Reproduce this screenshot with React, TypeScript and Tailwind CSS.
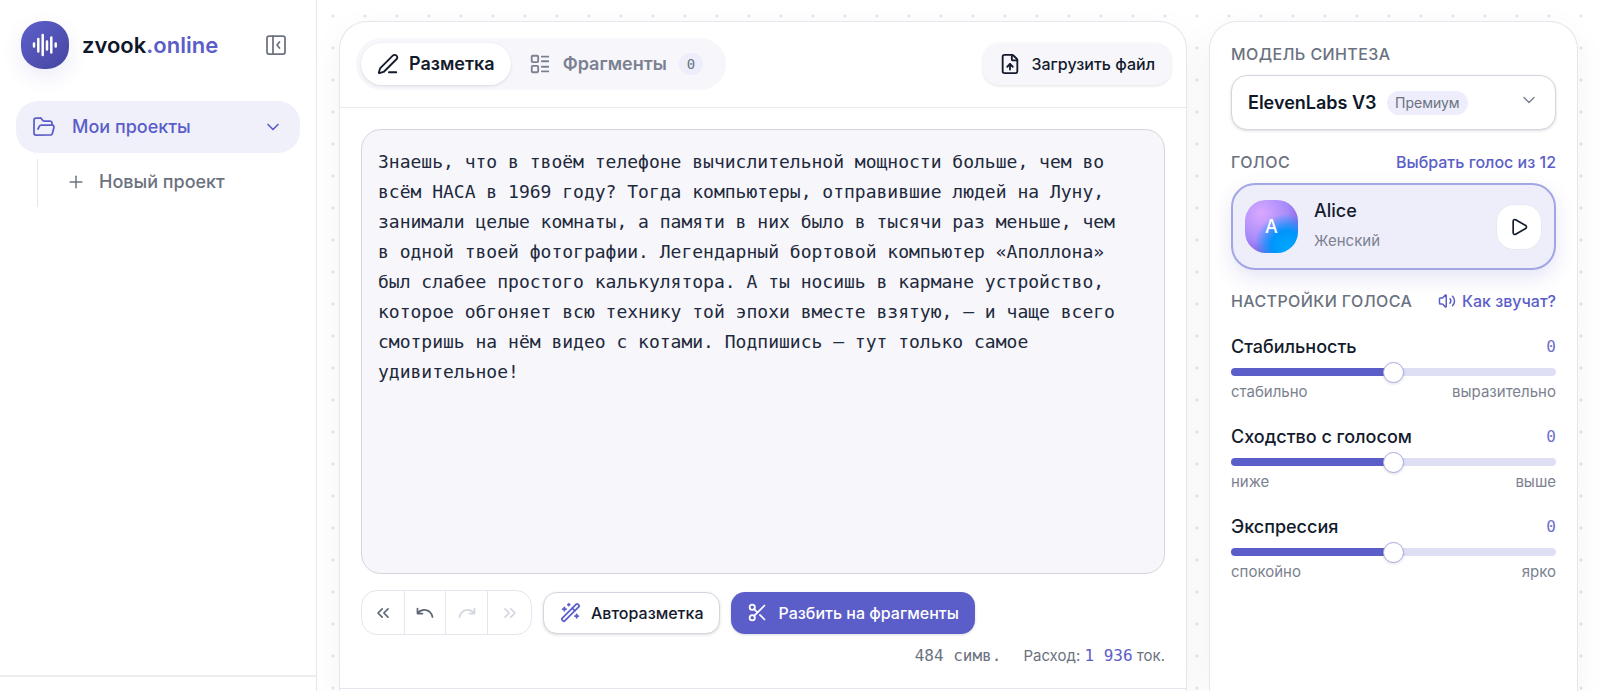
import { useState } from 'react'
import {
  ChevronDown,
  ChevronsLeft,
  ChevronsRight,
  FileUp,
  FolderOpen,
  LayoutList,
  PenLine,
  Play,
  Plus,
  Scissors,
  Volume2,
  WandSparkles,
} from 'lucide-react'

const SAMPLE_TEXT =
  'Знаешь, что в твоём телефоне вычислительной мощности больше, чем во всём НАСА в 1969 году? Тогда компьютеры, отправившие людей на Луну, занимали целые комнаты, а памяти в них было в тысячи раз меньше, чем в одной твоей фотографии. Легендарный бортовой компьютер «Аполлона» был слабее простого калькулятора. А ты носишь в кармане устройство, которое обгоняет всю технику той эпохи вместе взятую, — и чаще всего смотришь на нём видео с котами. Подпишись — тут только самое удивительное!'

const SLIDERS = [
  { id: 'stability', label: 'Стабильность', min: 'стабильно', max: 'выразительно' },
  { id: 'similarity', label: 'Сходство с голосом', min: 'ниже', max: 'выше' },
  { id: 'expression', label: 'Экспрессия', min: 'спокойно', max: 'ярко' },
]

function Logo() {
  return (
    <span className="flex size-12 items-center justify-center rounded-[22px] bg-linear-to-br from-[#5f60cb] to-[#4546a0] shadow-[0_8px_20px_rgba(91,94,200,0.12)]">
      <svg viewBox="0 0 26 24" className="h-6 w-[26px]" fill="none" stroke="white" strokeWidth="2.5" strokeLinecap="round">
        <path d="M2 10.500v3M6.300 6v12.500M10.700 2v20M15 8.500v8M19.300 4.500v15M23.700 10.500v3" />
      </svg>
    </span>
  )
}

function PanelIcon() {
  return (
    <svg viewBox="0 0 20 20" className="size-5" fill="none" stroke="currentColor" strokeWidth="1.75" strokeLinecap="round" strokeLinejoin="round">
      <rect x="1" y="1" width="18" height="18" rx="2" />
      <path d="M7 1v18M13.500 7 11 10l2.500 3" />
    </svg>
  )
}

function Arrow({ flip = false }: { flip?: boolean }) {
  return (
    <svg viewBox="0 0 18 12" className={`h-3 w-[18px] ${flip ? '-scale-x-100' : ''}`} fill="none" stroke="currentColor" strokeWidth="1.75" strokeLinecap="round" strokeLinejoin="round">
      <path d="M1.500 1.500v5h5M2 6C6 1.500 14.500 1.500 16.500 10" />
    </svg>
  )
}

function Sidebar() {
  return (
    <aside className="flex w-[317px] shrink-0 flex-col border-r border-[#e5e6ee] bg-white">
      <div className="flex items-center gap-[13px] pt-[21px] pr-[30px] pl-[21px]">
        <Logo />
        <a href="#" className="flex-1 text-[22px] leading-7 font-semibold text-[#0f172a]">
          zvook<span className="text-[#5b5ec8]">.online</span>
        </a>
        <button type="button" aria-label="Свернуть меню" className="text-[#6b7280]">
          <PanelIcon />
        </button>
      </div>
      <nav className="mt-8 flex-1 px-4">
        <button type="button" className="flex h-[52px] w-full items-center gap-4 rounded-[22px] bg-[#f0f0fb] px-4 text-lg font-medium text-[#5b5ec8]">
          <FolderOpen size={24} strokeWidth={1.75} />
          <span className="flex-1 text-left">Мои проекты</span>
          <ChevronDown size={20} strokeWidth={2} className="mr-px" />
        </button>
        <div className="mt-[6px] ml-[21px] flex h-12 border-l border-[#e5e6ee] pb-[2px] pl-7">
          <button type="button" className="flex items-center gap-[13px] text-lg font-medium text-[#6b7280]">
            <Plus size={20} strokeWidth={1.75} />
            Новый проект
          </button>
        </div>
      </nav>
      <div className="h-4 border-t-2 border-[#ededf0]" />
    </aside>
  )
}

function Editor() {
  const [text, setText] = useState(SAMPLE_TEXT)

  return (
    <section className="flex min-w-0 flex-1 flex-col rounded-t-[28px] border border-b-0 border-[#e5e6ee] bg-white shadow-[0_8px_32px_rgba(15,23,42,0.05)]">
      <header className="flex items-center justify-between border-b border-[#e8e9ef] pt-4 pr-[15px] pb-[17px] pl-4">
        <div className="flex rounded-[26px] bg-[#f6f6fb] p-[5px]">
          <button type="button" className="flex h-[42px] items-center gap-[10px] rounded-[21px] bg-white px-4 text-lg font-semibold text-[#141b2d] shadow-[0_1px_3px_rgba(15,23,42,0.12)]">
            <PenLine size={22} strokeWidth={2} />
            Разметка
          </button>
          <button type="button" className="flex h-[42px] items-center gap-3 px-[18px] text-lg font-semibold text-[#7b8190]">
            <LayoutList size={22} strokeWidth={2} />
            Фрагменты
            <span className="rounded-full bg-[#ededfb] px-2 font-['DejaVu_Sans_Mono',monospace] text-sm leading-[22px] font-normal text-[#6b7280]">0</span>
          </button>
        </div>
        <button type="button" className="flex h-[42px] items-center gap-[10px] rounded-2xl bg-[#f6f6fb] px-4 text-base font-medium text-[#141b2d] shadow-[0_1px_3px_rgba(15,23,42,0.12)]">
          <FileUp size={22} strokeWidth={2} />
          Загрузить файл
        </button>
      </header>
      <div className="flex flex-1 flex-col px-[21px] pt-[21px]">
        <textarea
          aria-label="Текст для озвучки"
          value={text}
          onChange={e => setText(e.target.value)}
          className="h-[445px] w-full resize-none rounded-[20px] border border-[#d3d6de] bg-[#f6f6fb] pt-[17px] pr-8 pl-4 font-['DejaVu_Sans_Mono',monospace] text-lg leading-[30px] text-[#1e293b] outline-none"
        />
        <div className="mt-4 flex items-center gap-[11px]">
          <div className="flex h-[45px] divide-x divide-[#e5e6ee] overflow-hidden rounded-2xl border border-[#e5e6ee] text-[#5f6675]">
            <button type="button" aria-label="В начало истории" className="flex w-[43px] items-center justify-center">
              <ChevronsLeft size={20} strokeWidth={2} />
            </button>
            <button type="button" aria-label="Отменить" className="flex w-[41px] items-center justify-center">
              <Arrow />
            </button>
            <button type="button" aria-label="Повторить" disabled className="flex w-[42px] items-center justify-center text-[#d3d6de]">
              <Arrow flip />
            </button>
            <button type="button" aria-label="В конец истории" disabled className="flex w-[43px] items-center justify-center text-[#d3d6de]">
              <ChevronsRight size={20} strokeWidth={2} />
            </button>
          </div>
          <button type="button" className="flex h-[42px] items-center gap-[10px] rounded-[14px] border border-[#d3d6de] bg-white px-4 text-base font-medium text-[#141b2d] shadow-[0_1px_3px_rgba(15,23,42,0.15)]">
            <WandSparkles size={21} strokeWidth={2} className="text-[#5b5ec8]" />
            Авторазметка
          </button>
          <button type="button" className="flex h-[42px] items-center gap-[10px] rounded-[14px] bg-[#5b5ec8] px-4 text-base font-medium text-white shadow-[0_1px_3px_rgba(15,23,42,0.15)]">
            <Scissors size={21} strokeWidth={2} />
            Разбить на фрагменты
          </button>
        </div>
        <div className="mt-[9px] flex items-baseline justify-end gap-[22px] text-[15px] leading-6 text-[#6b7280]">
          <span className="font-['DejaVu_Sans_Mono',monospace] text-base">484 симв.</span>
          <span>
            Расход: <span className="font-['DejaVu_Sans_Mono',monospace] text-base text-[#5b5ec8]">1 936</span> ток.
          </span>
        </div>
        <div className="-mx-[21px] mt-auto h-[3px] border-t border-[#e5e6ee]" />
      </div>
    </section>
  )
}

function Slider({ id, label, min, max }: { id: string; label: string; min: string; max: string }) {
  const [value, setValue] = useState(0)
  const percent = (value + 100) / 2

  return (
    <div>
      <div className="flex h-7 items-center justify-between">
        <label htmlFor={id} className="text-lg font-medium text-[#141b2d]">{label}</label>
        <output htmlFor={id} className="font-['DejaVu_Sans_Mono',monospace] text-base text-[#6d70d0]">{value}</output>
      </div>
      <input
        id={id}
        type="range"
        min={-100}
        max={100}
        value={value}
        onChange={e => setValue(Number(e.target.value))}
        style={{ backgroundImage: `linear-gradient(to right, #5b5ec8 ${percent}%, #dedff5 ${percent}%)` }}
        className="mt-[7px] block h-2 w-full appearance-none rounded-full [&::-webkit-slider-thumb]:size-[21px] [&::-webkit-slider-thumb]:appearance-none [&::-webkit-slider-thumb]:rounded-full [&::-webkit-slider-thumb]:border [&::-webkit-slider-thumb]:border-[#a9abe3] [&::-webkit-slider-thumb]:bg-white [&::-webkit-slider-thumb]:shadow-[0_1px_3px_rgba(15,23,42,0.15)]"
      />
      <div className="mt-[6px] flex justify-between text-[15px] leading-5 text-[#7b8190]">
        <span>{min}</span>
        <span>{max}</span>
      </div>
    </div>
  )
}

function VoicePanel() {
  return (
    <aside className="w-[369px] shrink-0 rounded-t-[28px] border border-b-0 border-[#e5e6ee] bg-white px-[21px] pt-5 shadow-[0_8px_32px_rgba(15,23,42,0.05)]">
      <label htmlFor="model" className="block text-base font-medium tracking-wide text-[#6b7280] uppercase">Модель синтеза</label>
      <div className="relative mt-[9px]">
        <select id="model" className="h-[55px] w-full appearance-none rounded-2xl border border-[#d3d6de] bg-white px-4 text-lg font-semibold text-[#0f172a] shadow-[0_1px_3px_rgba(15,23,42,0.15)]">
          <option>ElevenLabs V3</option>
        </select>
        <span className="pointer-events-none absolute top-4 left-[156px] rounded-full bg-[#ededfb] px-2 text-sm leading-6 text-[#6b7280]">Премиум</span>
        <ChevronDown size={20} strokeWidth={1.75} className="pointer-events-none absolute top-[15px] right-[17px] text-[#7b8190]" />
      </div>

      <div className="mt-5 flex items-center justify-between">
        <h2 className="text-base font-medium tracking-wide text-[#6b7280] uppercase">Голос</h2>
        <a href="#" className="text-base font-medium text-[#5b5ec8]">Выбрать голос из 12</a>
      </div>
      <div className="mt-[9px] flex h-[87px] items-center gap-4 rounded-[24px] border-2 border-[#a3a5e6] bg-[#eeeefa] px-3 shadow-[0_8px_20px_rgba(91,94,200,0.16)]">
        <span className="flex size-[53px] items-center justify-center rounded-[21px] bg-[radial-gradient(circle_at_78%_86%,#00a6ff_0%,#0095fb_24%,transparent_52%),radial-gradient(circle_at_30%_25%,#d9a8ff_0%,#a78bfa_50%,#8450d8_85%)] text-lg font-medium text-white">A</span>
        <div className="flex flex-1 flex-col gap-[6px] pb-[2px]">
          <span className="text-lg leading-6 font-medium text-[#141b2d]">Alice</span>
          <span className="text-[15px] leading-6 text-[#7b8190]">Женский</span>
        </div>
        <button type="button" aria-label="Прослушать" className="flex size-[46px] items-center justify-center rounded-[18px] border border-[#e8e9f2] bg-white text-[#141b2d]">
          <Play size={20} strokeWidth={2} />
        </button>
      </div>

      <div className="mt-[19px] flex items-center justify-between">
        <h2 className="text-base font-medium tracking-wide text-[#6b7280] uppercase">Настройки голоса</h2>
        <a href="#" className="flex items-center gap-[6px] text-base font-medium text-[#5b5ec8]">
          <Volume2 size={18} strokeWidth={2} />
          Как звучат?
        </a>
      </div>
      <div className="mt-5 flex flex-col gap-[21px]">
        {SLIDERS.map(s => (
          <Slider key={s.id} {...s} />
        ))}
      </div>
    </aside>
  )
}

export default function App() {
  return (
    <div className="flex min-h-screen bg-white font-[Inter,sans-serif]">
      <Sidebar />
      <main className="flex min-w-0 flex-1 gap-[22px] bg-[radial-gradient(circle,#e4e5ea_1px,transparent_2px)] bg-size-[32px_32px] pt-[21px] pr-[22px] pl-[22px]">
        <Editor />
        <VoicePanel />
      </main>
    </div>
  )
}
